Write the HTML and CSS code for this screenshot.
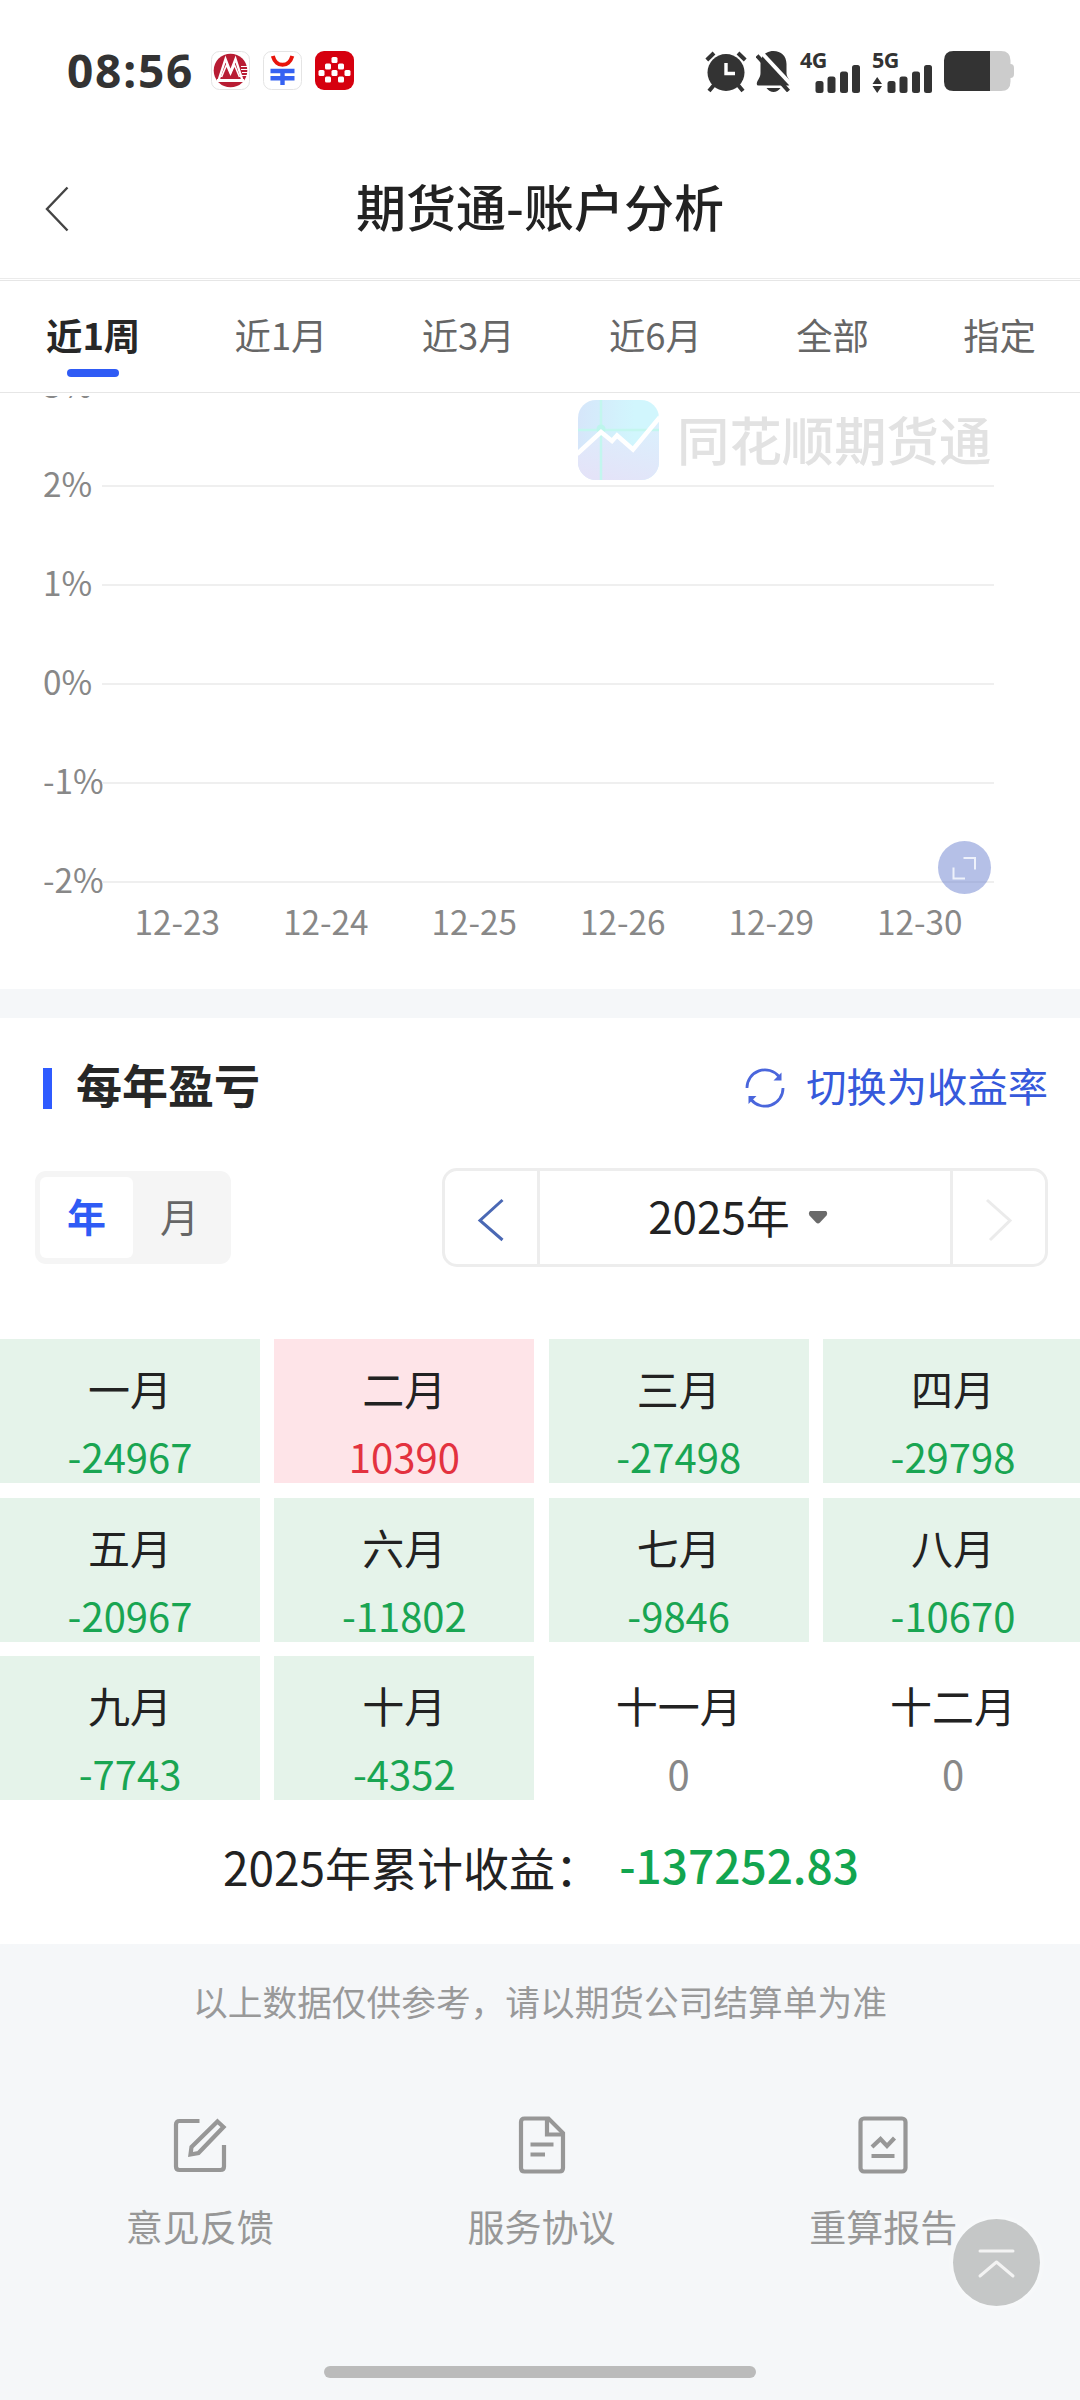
FILE: index.html
```html
<!DOCTYPE html>
<html lang="zh-CN">
<head>
<meta charset="utf-8">
<title>期货通-账户分析</title>
<link rel="stylesheet" href="styles.css">
</head>
<body>
<div class="screen">
  <div class="status">
    <span class="clock">08:56</span>
    <svg class="app" width="39" height="39" viewBox="0 0 39 39"><rect x=".5" y=".5" width="38" height="38" rx="8" fill="#fff" stroke="#e4e4e4"/><circle cx="19.5" cy="19.5" r="16.8" fill="#b81c33"/><path d="M7 31 14.500 8 19.500 21 24.500 8 32 31" fill="none" stroke="#fff" stroke-width="2.400"/><path d="M6 29.500H33" fill="none" stroke="#fff" stroke-width="3"/><path d="M10.500 26 15.500 14 19.500 23 23.500 14 28.500 26" fill="none" stroke="#fff" stroke-width="1.600"/><path d="M30 15.500h7M30 18.500h7M31 21.500h6M31 24.500h5" stroke="#fff" stroke-width="1"/></svg>
    <svg class="app" width="39" height="39" viewBox="0 0 39 39"><rect x=".5" y=".5" width="38" height="38" rx="8" fill="#fff" stroke="#e4e4e4"/><path d="M9.800 5C13 16.800 26 16.800 29.300 5" fill="none" stroke="#e8140c" stroke-width="4"/><path d="M7.500 20H31.500M7.500 27.300H31.500M19.500 20V34" fill="none" stroke="#3562f2" stroke-width="4.400"/></svg>
    <svg class="app" width="39" height="39" viewBox="0 0 39 39"><rect width="39" height="39" rx="9" fill="#d6000f"/><g fill="#fff"><rect x="16.500" y="6" width="6" height="6" rx="1.500"/><rect x="10" y="12.500" width="6" height="6" rx="1.500"/><rect x="23" y="12.500" width="6" height="6" rx="1.500"/><rect x="3.500" y="19" width="6" height="6" rx="1.500"/><rect x="16.500" y="19" width="6" height="6" rx="1.500"/><rect x="29.500" y="19" width="6" height="6" rx="1.500"/><rect x="10" y="25.500" width="6" height="6" rx="1.500"/><rect x="23" y="25.500" width="6" height="6" rx="1.500"/></g></svg>
    <div class="status-right">
      <svg width="42" height="41" viewBox="0 0 42 41"><circle cx="21" cy="21.500" r="18.500" fill="#333"/><path d="M21 12V22.500H30" fill="none" stroke="#fff" stroke-width="3.400"/><path d="M1.800 9 9 2M40.200 9 33 2M9 34 4 40M33 34 38 40" stroke="#333" stroke-width="4"/></svg>
      <svg class="bell" width="35" height="41" viewBox="0 0 35 41"><path d="M17.500 0C25 0 30.500 5 30.500 13V22C30.500 27 34.500 29 34.500 32.500Q34.500 34.500 32.500 34.500H2.500Q.5 34.500 .8 32.500C1.200 29 4.500 27 4.500 22V13C4.500 5 10 0 17.500 0ZM10.500 37H24.500Q21.500 41 17.500 41T10.500 37Z" fill="#333"/><path d="M3.500-.5 37 35.500" stroke="#fff" stroke-width="3.800"/><path d="M1 4.500 32.500 40" stroke="#333" stroke-width="4"/></svg>
      <svg class="sig4" width="61" height="42" viewBox="0 0 61 42"><text class="net" x="0" y="17">4G</text><g fill="#333"><rect x="15.500" y="30" width="8" height="12" rx="2.500"/><rect x="27.500" y="25.500" width="8" height="16.500" rx="2.500"/><rect x="40" y="20.500" width="8" height="21.500" rx="2.500"/><rect x="52" y="14" width="8" height="28" rx="2.500"/></g></svg>
      <svg class="sig5" width="61" height="42" viewBox="0 0 61 42"><text class="net" x="0" y="17">5G</text><g fill="#333"><path d="M5.200 26 10 33H.5ZM5.200 42 10 35H.5Z"/><rect x="15.500" y="30" width="8" height="12" rx="2.500"/><rect x="27.500" y="25.500" width="8" height="16.500" rx="2.500"/><rect x="40" y="20.500" width="8" height="21.500" rx="2.500"/><rect x="52" y="14" width="8" height="28" rx="2.500"/></g></svg>
      <svg class="battery" width="70" height="40" viewBox="0 0 70 40"><path d="M46 0H57Q66.500 0 66.500 9.500V13Q70 13 70 17V23Q70 27 66.500 27V30.500Q66.500 40 57 40H46Z" fill="#ccc"/><path d="M46 0H9.500Q0 0 0 9.500V30.500Q0 40 9.500 40H46Z" fill="#333"/></svg>
    </div>
  </div>

  <div class="header">
    <svg class="back" width="24" height="46" viewBox="0 0 24 46"><path d="M22.500 1.500 2 23 22.500 44.500" fill="none" stroke="#444" stroke-width="2.400"/></svg>
    <h1>期货通-账户分析</h1>
    <span class="back-space"></span>
  </div>

  <div class="tabs">
    <div class="tab on">近1周</div><div class="tab">近1月</div><div class="tab">近3月</div><div class="tab">近6月</div><div class="tab">全部</div><div class="tab">指定</div>
  </div>

  <div class="chart">
    <div class="rows">
      <div class="row"><span>3%</span><i></i></div>
      <div class="row"><span>2%</span><i></i></div>
      <div class="row"><span>1%</span><i></i></div>
      <div class="row"><span>0%</span><i></i></div>
      <div class="row"><span>-1%</span><i></i></div>
      <div class="row"><span>-2%</span><i></i></div>
    </div>
    <div class="dates"><span>12-23</span><span>12-24</span><span>12-25</span><span>12-26</span><span>12-29</span><span>12-30</span></div>
    <div class="mark">
      <svg width="81" height="80" viewBox="0 0 81 80"><defs><linearGradient id="sky" x1="0" y1="0" x2="1" y2="0"><stop offset="0" stop-color="#d6e6fa"/><stop offset=".7" stop-color="#d1f6fd"/></linearGradient><linearGradient id="sea" x1=".3" y1="1" x2=".7" y2="0"><stop offset="0" stop-color="#e4e3f8"/><stop offset="1" stop-color="#daf0fd"/></linearGradient><clipPath id="tile"><rect width="81" height="80" rx="18"/></clipPath></defs><g clip-path="url(#tile)"><rect width="81" height="80" fill="url(#sky)"/><path d="M0 53 23 31 34 40 39 35 55 49 81 18V80H0Z" fill="url(#sea)"/><path d="M23 0V80M0 30H81" stroke="#c3f6ee" stroke-width="2.500"/><circle cx="23" cy="29" r="4.500" fill="#bdf5ec"/><path d="M-1 54 23 32 34 41 39 35.500 55 49.500 82 17" fill="none" stroke="#fff" stroke-width="4.500"/></g></svg>
      <span>同花顺期货通</span>
    </div>
    <svg class="expand" width="53" height="53" viewBox="0 0 53 53"><circle cx="26.500" cy="26.500" r="26.500" fill="#6b82cf" fill-opacity=".5"/><path d="M25.500 17H37V28.500M15.500 26.500V37.500H27" fill="none" stroke="#eef1fb" stroke-width="2"/></svg>
  </div>

  <div class="section">
    <div class="section-head">
      <b class="bar"></b><h2>每年盈亏</h2>
      <svg class="swap" width="40" height="40" viewBox="0 0 40 40"><g fill="none" stroke="#4a66dc" stroke-width="2.800"><path d="M2 20A18 18 0 0 1 34 8.500"/><path d="M38 20A18 18 0 0 1 6 31.500"/></g><path d="M36.500 4.500V12.500H28.500ZM3.500 36V28H11.500Z" fill="#4a66dc"/></svg>
      <span class="swap-text">切换为收益率</span>
    </div>
    <div class="controls">
      <div class="toggle"><span class="on">年</span><span>月</span></div>
      <div class="picker">
        <div class="step"><svg width="26" height="42" viewBox="0 0 26 42"><path d="M24.500 1 2 21.500 24.500 41" fill="none" stroke="#4a68b4" stroke-width="3"/></svg></div>
        <div class="year"><span>2025年</span><svg width="20" height="13" viewBox="0 0 20 13"><path d="M2 0H18Q20 2 18.500 4.500L12 11.500Q10 13.500 8 11.500L1.500 4.500Q0 2 2 0Z" fill="#6a6a6a"/></svg></div>
        <div class="step"><svg width="26" height="42" viewBox="0 0 26 42"><path d="M1 1 24 21.500 4 41" fill="none" stroke="#ebebeb" stroke-width="3"/></svg></div>
      </div>
    </div>
    <div class="months">
      <div class="cell loss"><span>一月</span><em>-24967</em></div>
      <div class="cell gain"><span>二月</span><em>10390</em></div>
      <div class="cell loss"><span>三月</span><em>-27498</em></div>
      <div class="cell loss"><span>四月</span><em>-29798</em></div>
      <div class="cell loss"><span>五月</span><em>-20967</em></div>
      <div class="cell loss"><span>六月</span><em>-11802</em></div>
      <div class="cell loss"><span>七月</span><em>-9846</em></div>
      <div class="cell loss"><span>八月</span><em>-10670</em></div>
      <div class="cell loss"><span>九月</span><em>-7743</em></div>
      <div class="cell loss"><span>十月</span><em>-4352</em></div>
      <div class="cell"><span>十一月</span><em>0</em></div>
      <div class="cell"><span>十二月</span><em>0</em></div>
    </div>
    <div class="total"><span>2025年累计收益：</span><b>-137252.83</b></div>
  </div>

  <div class="footer">
    <p>以上数据仅供参考，请以期货公司结算单为准</p>
    <div class="links">
      <div class="link"><svg width="60" height="60" viewBox="0 0 60 60"><g fill="none" stroke="#979797" stroke-width="4.200"><path d="M29.500 6H9.500Q6 6 6 9.500V51.500Q6 55 9.500 55H50.500Q54 55 54 51.500V30"/><path d="M47.500 6.500 53.500 12 28.500 38 20.500 39.500 21.500 32Z"/></g></svg><span>意见反馈</span></div>
      <div class="link"><svg width="60" height="60" viewBox="0 0 60 60"><g fill="none" stroke="#979797" stroke-width="4.200"><path d="M36.500 3.500H12.500Q9 3.500 9 7V53Q9 56.500 12.500 56.500H47.500Q51 56.500 51 53V18Z"/><path d="M35 4V19.500H51M18.500 29.500H41.500M18.500 39.500H33"/></g></svg><span>服务协议</span></div>
      <div class="link"><svg width="60" height="60" viewBox="0 0 60 60"><g fill="none" stroke="#979797" stroke-width="4.200"><rect x="7.500" y="3.500" width="45" height="53" rx="3.500"/><path d="M19 32 27.500 24 34 31 41.500 23M18.500 41H41.500"/></g></svg><span>重算报告</span></div>
    </div>
    <div class="home"></div>
    <svg class="top" width="87" height="87" viewBox="0 0 87 87"><circle cx="43.500" cy="43.500" r="43.500" fill="#c5c7c7"/><path d="M27 32H60M27 57 43.500 43 60 57" fill="none" stroke="#f3f3f3" stroke-width="3" stroke-linecap="round" stroke-linejoin="round"/></svg>
  </div>
</div>
</body>
</html>
```
FILE: styles.css
```css
* { box-sizing: border-box; margin: 0; padding: 0; }
body { width: 1080px; height: 2400px; overflow: hidden; background: #fff; font-family: "Noto Sans CJK SC", sans-serif; color: #222; }
svg { display: block; flex: none; overflow: visible; }
.screen { width: 1080px; height: 2400px; display: flex; flex-direction: column; overflow: hidden; background: #fff; }

.status { height: 133px; padding: 51px 66px 0 67px; display: flex; align-items: flex-start; }
.clock { width: 131px; margin-right: 13px; font: 700 46px/38px "Noto Sans", sans-serif; letter-spacing: 1.800px; color: #333; }
.app { margin-right: 13px; }
.status-right { margin-left: auto; display: flex; align-items: flex-start; }
.bell { margin-left: 9px; overflow: hidden; }
.sig4 { margin-left: 9px; }
.sig5 { margin-left: 11px; }
.battery { margin-left: 11px; }
.net { font: 700 21.500px "Noto Sans", sans-serif; fill: #333; letter-spacing: -.5px; }

.header { height: 146px; padding: 0 45px; display: flex; justify-content: space-between; border-bottom: 1px solid #ebebeb; }
.back { margin-top: 53px; }
.back-space { width: 24px; }
h1 { font-size: 50px; line-height: 144px; font-weight: 500; }

.tabs { height: 116px; border-top: 1px solid #e6e6e6; margin-top: 1px; padding: 27px 44px 0 46px; display: flex; justify-content: space-between; position: relative; }
.tabs::after { content: ""; position: absolute; left: 0; right: 0; bottom: 3px; height: 1px; background: #e6e6e6; }
.tab { font-size: 36.400px; line-height: 52px; color: #666; display: flex; flex-direction: column; align-items: center; }
.tab.on { font-weight: 700; color: #272727; }
.tab.on::after { content: ""; width: 52px; height: 8px; border-radius: 4px; background: #2f5bf5; margin-top: 9px; }

.chart { height: 593px; flex: none; overflow: hidden; position: relative; padding: 0 86px 0 43px; }
.rows { margin-top: -58.500px; }
.row { height: 99px; display: flex; align-items: center; }
.row span { width: 59px; white-space: nowrap; font-size: 33.300px; line-height: 40px; padding-bottom: 6px; color: #888; }
.row i { flex: 1; height: 2px; background: #efefef; }
.dates { margin: -31px 0 0 60px; display: grid; grid-template-columns: repeat(6, 1fr); font-size: 33.300px; line-height: 40px; color: #888; text-align: center; }
.mark { position: absolute; left: 578px; top: 4px; display: flex; gap: 18px; align-items: center; }
.mark span { font-size: 52.400px; line-height: 76px; font-weight: 500; color: #e2e2e2; white-space: nowrap; padding-bottom: 4px; }
.expand { position: absolute; left: 938px; top: 445px; }

.section { border-top: 29px solid #f5f7f9; height: 955px; flex: none; }
.section-head { height: 130px; padding: 50px 32px 0 43px; display: flex; align-items: flex-start; }
.bar { width: 9px; height: 41px; background: #2f5bff; }
h2 { margin: -10px auto 0 24px; font-size: 46px; line-height: 50px; font-weight: 700; color: #272727; }
.swap-text { margin-left: 21px; margin-top: -8px; font-size: 40.300px; line-height: 50px; color: #3659db; }
.controls { height: 119px; padding: 20px 32px 0 35px; display: flex; justify-content: space-between; align-items: flex-start; }
.toggle { width: 196px; height: 93px; margin-top: 3px; padding: 6px 5px; display: flex; background: #f5f5f5; border-radius: 11px; }
.toggle span { flex: 1; text-align: center; font-size: 39px; line-height: 77px; color: #666; border-radius: 6px; }
.toggle .on { background: #fff; color: #2f5bf5; font-weight: 700; }
.picker { width: 606px; height: 99px; border: 3px solid #ededed; border-radius: 15px; display: flex; }
.step { width: 92px; display: flex; align-items: center; justify-content: center; padding-top: 4px; }
.year { flex: 1; border: solid #ededed; border-width: 0 3px; padding-right: 14px; display: flex; align-items: center; justify-content: center; gap: 18px; font-size: 44px; line-height: 90px; }
.year span { padding-bottom: 6px; }
.months { margin-top: 72px; display: grid; grid-template-columns: repeat(4, 260px); grid-auto-rows: 144px; gap: 14.600px 14.330px; }
.cell { display: flex; flex-direction: column; align-items: center; padding-top: 16px; }
.cell span { font-size: 42px; line-height: 66px; }
.cell em { font-size: 40px; font-style: normal; line-height: 60px; margin-top: 5px; color: #888; }
.loss { background: #e5f3ea; }
.loss em { color: #19a552; }
.gain { background: #fee4e8; }
.gain em { color: #e3323f; }
.total { margin: 31px 0 0 223px; display: flex; line-height: 70px; font-size: 46px; white-space: nowrap; }
.total b { font-size: 46px; line-height: 67px; margin-left: 18px; color: #12a54f; font-weight: 500; }

.footer { flex: 1; background: #f5f7f9; position: relative; padding-top: 30px; }
.footer p { text-align: center; font-size: 34.700px; line-height: 54px; color: #999; }
.links { margin: 87px 26px 0 29px; display: grid; grid-template-columns: repeat(3, 341.700px); }
.link { display: flex; flex-direction: column; align-items: center; }
.link span { margin-top: 24px; font-size: 37px; line-height: 54px; color: #979797; }
.home { position: absolute; left: 324px; top: 422px; width: 432px; height: 12px; border-radius: 6px; background: #bbb; }
.top { position: absolute; left: 953px; top: 275px; border-radius: 50%; box-shadow: 0 0 10px rgba(255, 255, 255, .6); }
```
